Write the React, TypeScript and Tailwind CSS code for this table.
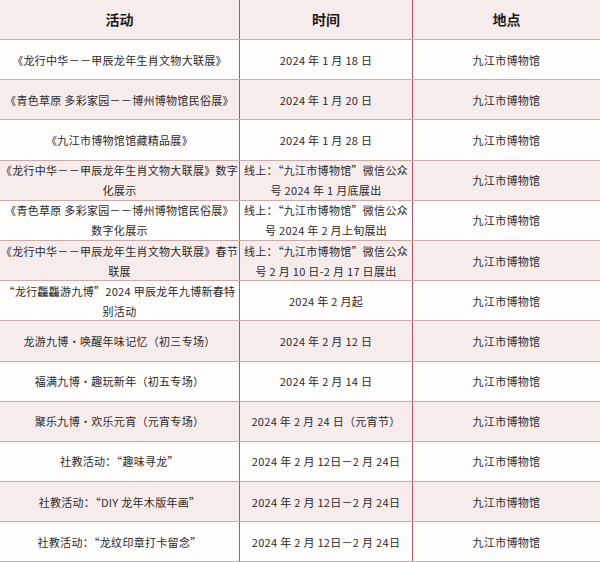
import React from "react";

type Row = { a: string[]; t: string[]; p: string };

const rows: Row[] = [
  { a: ["《龙行中华－－甲辰龙年生肖文物大联展》"], t: ["2024 年 1 月 18 日"], p: "九江市博物馆" },
  { a: ["《青色草原 多彩家园－－博州博物馆民俗展》"], t: ["2024 年 1 月 20 日"], p: "九江市博物馆" },
  { a: ["《九江市博物馆馆藏精品展》"], t: ["2024 年 1 月 28 日"], p: "九江市博物馆" },
  { a: ["《龙行中华－－甲辰龙年生肖文物大联展》数字", "化展示"], t: ["线上：“九江市博物馆”微信公众", "号 2024 年 1 月底展出"], p: "九江市博物馆" },
  { a: ["《青色草原 多彩家园－－博州博物馆民俗展》", "数字化展示"], t: ["线上：“九江市博物馆”微信公众", "号 2024 年 2 月上旬展出"], p: "九江市博物馆" },
  { a: ["《龙行中华－－甲辰龙年生肖文物大联展》春节", "联展"], t: ["线上：“九江市博物馆”微信公众", "号 2 月 10 日-2 月 17 日展出"], p: "九江市博物馆" },
  { a: ["“龙行龘龘游九博”2024 甲辰龙年九博新春特", "别活动"], t: ["2024 年 2 月起"], p: "九江市博物馆" },
  { a: ["龙游九博·唤醒年味记忆（初三专场）"], t: ["2024 年 2 月 12 日"], p: "九江市博物馆" },
  { a: ["福满九博·趣玩新年（初五专场）"], t: ["2024 年 2 月 14 日"], p: "九江市博物馆" },
  { a: ["聚乐九博·欢乐元宵（元宵专场）"], t: ["2024 年 2 月 24 日（元宵节）"], p: "九江市博物馆" },
  { a: ["社教活动：“趣味寻龙”"], t: ["2024 年 2 月 12日－2 月 24日"], p: "九江市博物馆" },
  { a: ["社教活动：“DIY 龙年木版年画”"], t: ["2024 年 2 月 12日－2 月 24日"], p: "九江市博物馆" },
  { a: ["社教活动：“龙纹印章打卡留念”"], t: ["2024 年 2 月 12日－2 月 24日"], p: "九江市博物馆" },
];

function Cell({ lines, className }: { lines: string[]; className: string }) {
  return (
    <div className={"flex flex-col items-center justify-center text-center leading-[20px] " + className}>
      {lines.map((l, i) => (
        <div key={i} className="whitespace-nowrap">{l}</div>
      ))}
    </div>
  );
}

export default function App() {
  return (
    <div
      className="w-[600px] h-[562px] overflow-hidden bg-white text-[11px] tracking-[0.3px] text-[#2a2a2a]"
      style={{ fontFamily: '"Noto Sans CJK SC", "Liberation Sans", sans-serif' }}
    >
      <div className="flex h-[40px] bg-[#f7ecec] border-b border-[#c9abab] font-bold text-[14px] tracking-normal text-[#1a1a1a]">
        <div className="w-[240px] flex items-center justify-center border-r border-[#a85a62]">活动</div>
        <div className="w-[173px] flex items-center justify-center border-r border-[#a85a62]">时间</div>
        <div className="flex-1 flex items-center justify-center">地点</div>
      </div>
      {rows.map((r, i) => (
        <div
          key={i}
          className={
            "flex h-[40.2px] border-b border-[#c9abab] " + (i % 2 === 1 ? "bg-[#f7ecec]" : "bg-[#fffcfc]")
          }
        >
          <Cell lines={r.a} className="w-[240px] border-r border-[#a85a62]" />
          <Cell lines={r.t} className="w-[173px] border-r border-[#a85a62]" />
          <Cell lines={[r.p]} className="flex-1" />
        </div>
      ))}
    </div>
  );
}
